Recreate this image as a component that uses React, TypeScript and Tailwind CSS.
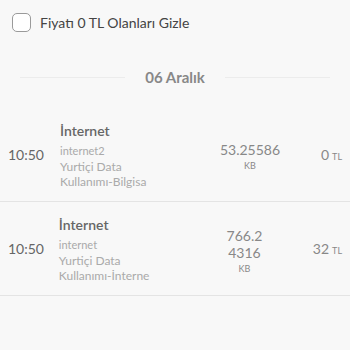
import React from 'react';

type Row = {
  time: string;
  title: string;
  sub: string;
  desc: string[];
  amount: string[];
  price: string;
};

const rows: Row[] = [
  {
    time: '10:50',
    title: 'İnternet',
    sub: 'internet2',
    desc: ['Yurtiçi Data', 'Kullanımı-Bilgisa'],
    amount: ['53.25586'],
    price: '0',
  },
  {
    time: '10:50',
    title: 'İnternet',
    sub: 'internet',
    desc: ['Yurtiçi Data', 'Kullanımı-İnterne'],
    amount: ['766.2', '4316'],
    price: '32',
  },
];

export default function App() {
  return (
    <div className="w-[350px] h-[350px] bg-[#f8f8f8] overflow-hidden font-['Lato',sans-serif]">
      {/* filter */}
      <div className="flex items-center gap-[9px] pl-3 pt-[13px] h-[31px]">
        <div className="w-[19px] h-[19px] rounded-[5px] border-[1.5px] border-[#9a9a9a] bg-white" />
        <span className="text-[14px] text-[#444]">Fiyatı 0 TL Olanları Gizle</span>
      </div>

      {/* date header */}
      <div className="flex items-center mt-[36px] px-5 h-[20px]">
        <div className="flex-1 h-px bg-[#ececec]" />
        <span className="px-[20px] text-[15px] font-bold text-[#888]">06 Aralık</span>
        <div className="flex-1 h-px bg-[#ececec]" />
      </div>

      <div className="mt-[21px]">
        {rows.map((r, i) => (
          <div key={i} className="flex items-center h-[94px] border-b border-[#e4e4e4]">
            <div className="w-[60px] pl-2 text-[14px] text-[#666]">{r.time}</div>
            <div className="w-[120px] flex flex-col">
              <span className="text-[14px] font-semibold text-[#666] leading-[20px]">{r.title}</span>
              <span className="text-[11px] text-[#aaa] leading-[17px] mt-[1px]">{r.sub}</span>
              {r.desc.map((d) => (
                <span key={d} className="text-[12px] text-[#aaa] leading-[15px]">
                  {d}
                </span>
              ))}
            </div>
            <div className="w-[140px] flex flex-col items-center pt-[4px] text-[#888]">
              {r.amount.map((a) => (
                <span key={a} className="text-[14px] leading-[17px]">
                  {a}
                </span>
              ))}
              <span className="text-[9px] leading-[12px] mt-[2px]">KB</span>
            </div>
            <div className="flex-1 flex justify-end items-baseline pr-[8px] text-[#888]">
              <span className="text-[14px]">{r.price}</span>
              <span className="text-[9px] ml-[3px]">TL</span>
            </div>
          </div>
        ))}
      </div>
    </div>
  );
}
